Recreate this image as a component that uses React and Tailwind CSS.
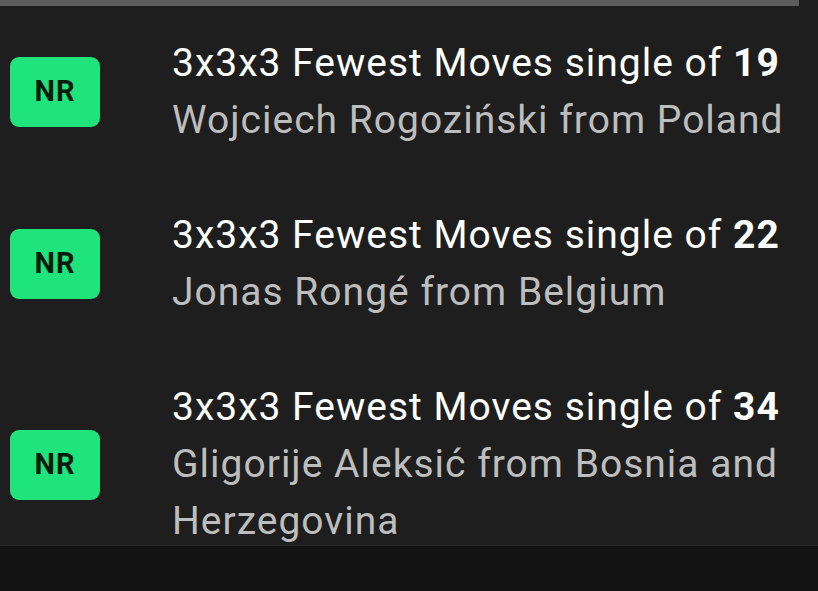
const records = [
  { event: '3x3x3 Fewest Moves single of', result: '19', person: 'Wojciech Rogoziński from Poland' },
  { event: '3x3x3 Fewest Moves single of', result: '22', person: 'Jonas Rongé from Belgium' },
  { event: '3x3x3 Fewest Moves single of', result: '34', person: 'Gligorije Aleksić from Bosnia and Herzegovina' },
];

function RecordRow({ record }) {
  return (
    <div className="flex items-center">
      <div className="ml-[10px] w-[90px] h-[70px] shrink-0 rounded-[9px] bg-[#1ee47b] flex items-center justify-center">
        <span className="text-[29px] font-bold tracking-[1px] text-[#071a0e]">NR</span>
      </div>
      <div className="ml-[72px] text-[39px] leading-[57px] tracking-[1px]">
        <div className="text-white">
          {record.event} <span className="font-bold">{record.result}</span>
        </div>
        <div className="text-[#bdbdbd]">{record.person}</div>
      </div>
    </div>
  );
}

export default function App() {
  return (
    <div className="w-[818px] h-[591px] bg-[#121212] overflow-hidden font-['Roboto',sans-serif]">
      <div className="flex bg-[#1e1e1e]">
        <div className="w-[799px] h-[6px] bg-[#5c5c5c]" />
      </div>
      <div className="h-[540px] overflow-hidden bg-[#1e1e1e] border-b border-[#262626] pt-[29px] flex flex-col gap-[58px]">
        {records.map((r) => (
          <RecordRow key={r.result} record={r} />
        ))}
      </div>
    </div>
  );
}
